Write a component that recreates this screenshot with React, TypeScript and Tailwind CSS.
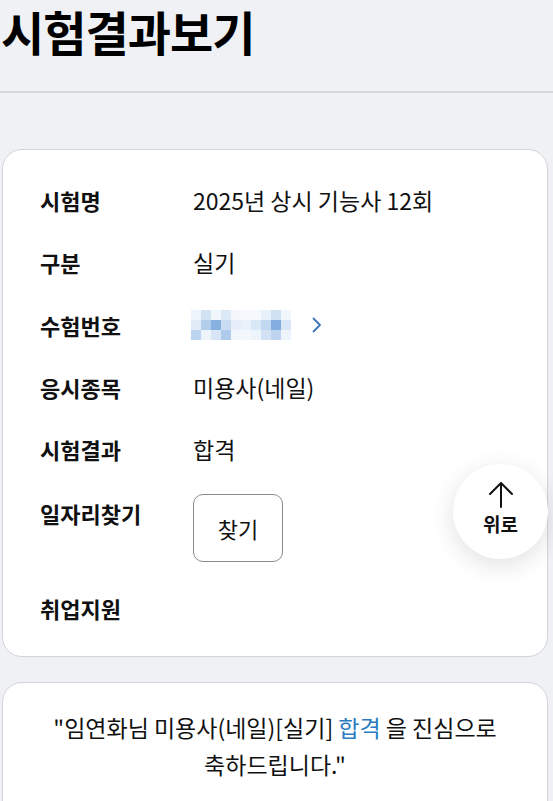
import React from 'react'

const rows = [
  { label: '시험명', value: '2025년 상시 기능사 12회' },
  { label: '구분', value: '실기' },
  { label: '수험번호', value: 'blur' },
  { label: '응시종목', value: '미용사(네일)' },
  { label: '시험결과', value: '합격' },
]

// pixelated stand-in for the masked exam number
const blurCells = [
  ['#eef4fb', '#d3e3f4', '#f1f6fc', '#dbe8f6', '#f3f7fc', '#f5f8fd', '#f5f8fd', '#e8f0fa', '#cfe0f3', '#f1f6fc'],
  ['#e0ebf7', '#b3cdec', '#86b0e0', '#cadcf2', '#e6eff9', '#e9f1fa', '#dae7f6', '#c2d7f0', '#82ade0', '#d8e6f6'],
  ['#bcd4ef', '#edf3fb', '#d7e5f5', '#afcbeb', '#f1f6fc', '#f4f8fd', '#eef4fb', '#d2e2f4', '#bdd3ef', '#eef4fb'],
]

function MaskedNumber() {
  return (
    <div className="flex items-center">
      <div className="flex flex-col blur-[0.5px] ml-[-2px]">
        {blurCells.map((row, i) => (
          <div key={i} className="flex">
            {row.map((c, j) => (
              <div key={j} className="w-[10px] h-[10px]" style={{ backgroundColor: c }} />
            ))}
          </div>
        ))}
      </div>
      <svg className="ml-[21px]" width="10" height="16" viewBox="0 0 10 16" fill="none">
        <path d="M1.5 1.5L8 8L1.5 14.5" stroke="#3a76b8" strokeWidth="1.8" strokeLinecap="round" strokeLinejoin="round" />
      </svg>
    </div>
  )
}

export default function App() {
  return (
    <div
      className="relative min-h-[801px] bg-[#f0f1f5] overflow-hidden text-[#111]"
      style={{ fontFamily: '"Noto Sans CJK KR", "Noto Sans", sans-serif' }}
    >
      <h1 className="h-[61px] leading-[61px] text-[47px] font-bold tracking-[-1px] pl-px text-black">
        시험결과보기
      </h1>
      <div className="mt-[30px] h-[2px] bg-[#d7d8dc]" />

      <div className="mt-[56px] mx-[2px] w-[546px] bg-white border border-[#d3d4d8] rounded-[20px] pt-[35px] pb-[33px] px-[37px]">
        <div className="flex flex-col gap-[32.3px]">
          {rows.map((r) => (
            <div key={r.label} className="grid grid-cols-[153px_1fr] items-center h-[30px]">
              <span className="text-[22px] font-bold leading-[30px]">{r.label}</span>
              {r.value === 'blur' ? (
                <MaskedNumber />
              ) : (
                <span className="text-[23px] leading-[30px]">{r.value}</span>
              )}
            </div>
          ))}
        </div>

        <div className="grid grid-cols-[153px_1fr] mt-[30px]">
          <span className="text-[22px] font-bold leading-[30px] mt-[4px]">일자리찾기</span>
          <div>
            <button className="w-[90px] h-[68px] border-[1.5px] border-[#8a8a8a] rounded-[10px] bg-white text-[22px] text-[#111]">
              찾기
            </button>
          </div>
        </div>

        <div className="mt-[31px] h-[30px]">
          <span className="text-[22px] font-bold leading-[30px]">취업지원</span>
        </div>
      </div>

      <div className="mt-[25px] mx-[2px] w-[546px] h-[140px] bg-white border border-[#d3d4d8] rounded-[20px] pt-[26px] px-[30px] text-center">
        <p className="text-[23px] leading-[37px] break-keep">
          "임연화님 미용사(네일)[실기] <span className="text-[#2a7bc0]">합격</span> 을 진심으로 축하드립니다."
        </p>
      </div>

      <button className="absolute left-[453px] top-[464px] w-[95px] h-[95px] rounded-full bg-white shadow-[0_6px_24px_rgba(0,0,0,0.12)] flex flex-col items-center justify-center">
        <svg width="26" height="27" viewBox="0 0 26 27" fill="none" className="mt-[-6px]">
          <path d="M13 2V26M2 13L13 2L24 13" stroke="#111" strokeWidth="2" strokeLinecap="round" strokeLinejoin="round" />
        </svg>
        <span className="text-[19px] font-bold leading-[24px] mt-[4px]">위로</span>
      </button>
    </div>
  )
}
